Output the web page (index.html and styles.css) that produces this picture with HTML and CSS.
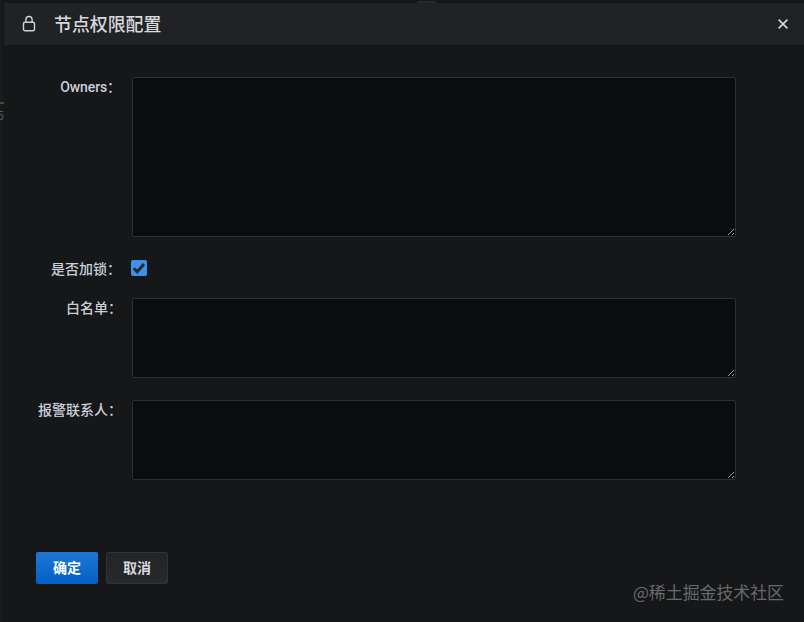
FILE: index.html
```
<!DOCTYPE html>
<html lang="zh-CN">
<head>
    <meta charset="UTF-8">
    <meta name="viewport" content="width=device-width, initial-scale=1.0">
    <title>节点权限配置</title>
    <link rel="stylesheet" href="styles.css">
</head>

<body>
    <div class="page_behind">
        <span class="behind_tab"></span>
        <span class="behind_line"></span>
        <span class="behind_number">5</span>
    </div>
    <div class="modal">
        <div class="modal_header">
            <svg class="lock_icon" width="14" height="18" viewBox="0 0 14 18" fill="none" stroke="currentColor" stroke-width="1.4">
                <rect x="1.5" y="7.2" width="11" height="8.6" rx="1.6"/>
                <path d="M3.9 7.2V4.6a3.1 3.1 0 0 1 6.2 0v2.6"/>
            </svg>
            <h1 class="modal_title">节点权限配置</h1>
            <button class="close_button" type="button" aria-label="关闭">
                <svg width="12" height="12" viewBox="0 0 12 12" fill="none" stroke="currentColor" stroke-width="1.6">
                    <path d="M1.6 1.6l8.8 8.8M10.4 1.6l-8.8 8.8"/>
                </svg>
            </button>
        </div>

        <form class="modal_form">
            <div class="form_row owners_row">
                <label class="form_label owners_label" for="owners">Owners：</label>
                <textarea class="form_textarea owners_input" id="owners"></textarea>
            </div>
            <div class="form_row lock_row">
                <label class="form_label lock_label" for="locked">是否加锁：</label>
                <input class="lock_input" type="checkbox" id="locked" checked>
                <label class="lock_box" for="locked">
                    <svg width="16" height="16" viewBox="0 0 16 16" fill="none" stroke="currentColor" stroke-width="3">
                        <path d="M2.8 8.2l3.4 3.5 6.8-7.6"/>
                    </svg>
                </label>
            </div>
            <div class="form_row whitelist_row">
                <label class="form_label" for="whitelist">白名单：</label>
                <textarea class="form_textarea" id="whitelist"></textarea>
            </div>
            <div class="form_row">
                <label class="form_label" for="contacts">报警联系人：</label>
                <textarea class="form_textarea" id="contacts"></textarea>
            </div>
            <div class="form_buttons">
                <button class="button button_primary" type="button">确定</button>
                <button class="button button_secondary" type="button">取消</button>
            </div>
        </form>
    </div>
    <span class="watermark">@稀土掘金技术社区</span>
</body>
</html>
```
FILE: styles.css
```
* {
    box-sizing: border-box;
}

body {
    margin: 0;
    height: 100vh;
    overflow: hidden;
    background-color: #141619;
    color: #d0d2d6;
    font-family: Roboto, "Noto Sans CJK SC", sans-serif;
    font-size: 14px;
}

.page_behind {
    position: absolute;
    top: 0;
    left: 0;
    width: 100%;
    height: 100%;
    background: linear-gradient(90deg, #141d1f, #141619 5px);
}

.behind_tab {
    position: absolute;
    top: 1px;
    left: 417px;
    width: 19px;
    height: 2px;
    background-color: #26282b;
}

.behind_line {
    position: absolute;
    top: 102px;
    left: 0;
    width: 4px;
    height: 2px;
    background-color: #4d4d20;
}

.behind_number {
    position: absolute;
    top: 109px;
    left: -3px;
    color: #55585b;
    font-size: 12px;
    line-height: 14px;
}

.modal {
    position: relative;
    height: 619px;
    margin: 3px 0 0 4px;
    background-color: #161719;
}

.modal_header {
    display: flex;
    align-items: center;
    height: 43px;
    padding: 0 15px 0 18px;
    background-color: #202226;
    border-bottom: 1px solid #141518;
}

.lock_icon {
    flex: none;
    color: #d0d1d3;
}

.modal_title {
    margin: 0 auto 0 18px;
    padding-top: 1px;
    font-size: 17.9px;
    font-weight: 500;
    line-height: 24px;
    color: #d8d9da;
}

.close_button {
    display: flex;
    padding: 0;
    border: 0;
    background: none;
    color: #d5d7da;
}

.modal_form {
    padding: 31px 0 0 32px;
}

.form_row {
    display: flex;
    align-items: flex-start;
    margin-bottom: 22px;
}

.form_label {
    width: 86px;
    margin-right: 10px;
    padding-top: 1px;
    font-weight: 500;
    line-height: 18px;
    text-align: right;
    white-space: nowrap;
    color: #c7d0d9;
}

.owners_label {
    padding-right: 1px;
    letter-spacing: -0.1px;
}

.lock_label {
    padding-right: 1px;
}

.form_textarea {
    width: 604px;
    height: 80px;
    border: 1px solid #2c3033;
    border-radius: 2px;
    background-color: #0b0c0e;
    color: #c7d0d9;
    resize: vertical;
}

.owners_input {
    height: 160px;
}

.lock_row {
    height: 17px;
}

.lock_input {
    position: absolute;
    opacity: 0;
}

.lock_box {
    width: 16px;
    height: 16px;
    margin: 1px 0 0 -1px;
    border-radius: 2px;
    background-color: #4190e8;
    color: #242b35;
}

.lock_box svg {
    display: block;
}

.form_buttons {
    display: flex;
    gap: 8px;
    padding-top: 50px;
}

.button {
    width: 62px;
    height: 32px;
    padding: 0 0 2px;
    border: 0;
    border-radius: 2px;
    font-family: inherit;
    font-size: 14px;
    font-weight: 700;
    color: #fff;
}

.button_primary {
    background: linear-gradient(180deg, #1f77d5, #0360c4);
}

.button_secondary {
    border: 1px solid #2f3236;
    background: linear-gradient(180deg, #222427, #272a2e);
    color: #d8d9da;
}

.watermark {
    position: absolute;
    right: 20px;
    bottom: 18px;
    font-family: "Noto Sans CJK SC", sans-serif;
    font-size: 16.9px;
    line-height: 24px;
    color: #68696b;
}
```
